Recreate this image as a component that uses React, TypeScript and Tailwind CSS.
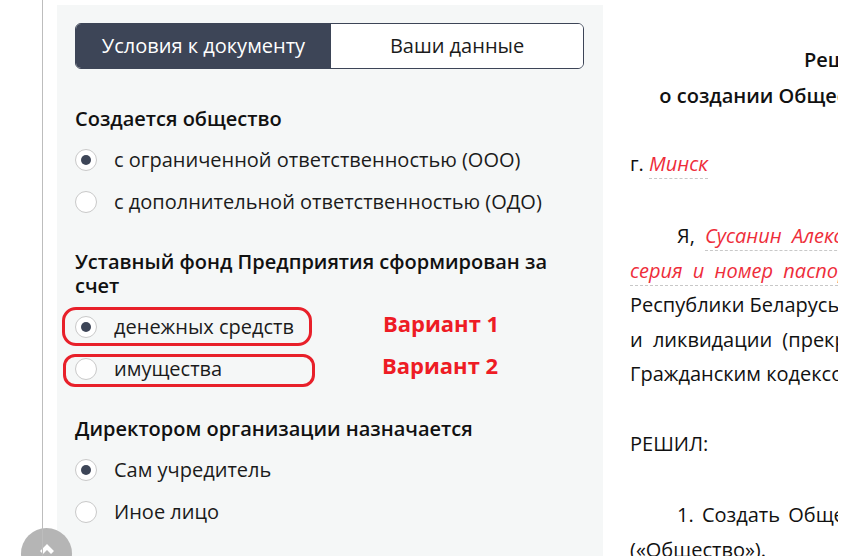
const options1 = [
  { label: "с ограниченной ответственностью (ООО)", checked: true },
  { label: "с дополнительной ответственностью (ОДО)", checked: false },
];

const options3 = [
  { label: "Сам учредитель", checked: true },
  { label: "Иное лицо", checked: false },
];

function Radio({ checked }: { checked: boolean }) {
  return (
    <span className="w-[22px] h-[22px] shrink-0 rounded-full border border-[#c9c9c9] bg-white flex items-center justify-center">
      {checked && <span className="w-[10px] h-[10px] rounded-full bg-[#3d4557]" />}
    </span>
  );
}

function Option({
  label,
  checked,
  children,
}: {
  label: string;
  checked: boolean;
  children?: React.ReactNode;
}) {
  return (
    <div className="relative h-[42px] flex items-center gap-[17px]">
      <Radio checked={checked} />
      <span className="text-[20px] text-[#1b1b1b]">{label}</span>
      {children}
    </div>
  );
}

function Field({ children }: { children: React.ReactNode }) {
  return (
    <span className="italic text-[#ee2d3a] border-b border-dashed border-[#c8c8c8] pb-[1px]">
      {children}
    </span>
  );
}

export default function App() {
  return (
    <div className="relative w-[851px] h-[556px] overflow-hidden bg-white flex font-['Open_Sans',sans-serif] text-[#111]">
      {/* scroll-to-top button behind the guide line */}
      <div className="absolute left-[21px] top-[528px] w-[51px] h-[51px] rounded-full bg-[#b5b5b5] flex justify-center pt-[15px]">
        <svg width="16" height="12" viewBox="0 0 16 12">
          <path d="M8 1 L15 8 L12 11 L8 7 L4 11 L1 8 Z" fill="white" />
        </svg>
      </div>
      <div className="relative z-10 w-[43px] shrink-0 border-r border-[#bdbdbd]" />
      <div className="w-[14px] shrink-0" />

      {/* settings panel */}
      <div className="w-[546px] shrink-0 mt-[5px] bg-[#f5f7f7] pt-[18px] pl-[18px] pr-[19px]">
        <div className="flex h-[46px] rounded-md border border-[#3d4557] overflow-hidden text-[20px]">
          <div className="w-[255px] bg-[#3d4557] text-white flex items-center justify-center">
            Условия к документу
          </div>
          <div className="flex-1 bg-white text-[#1b1b1b] flex items-center justify-center">
            Ваши данные
          </div>
        </div>

        <div className="mt-[38px] text-[20px] leading-[24px] font-semibold">Создается общество</div>
        <div className="mt-[8px]">
          {options1.map((o) => (
            <Option key={o.label} label={o.label} checked={o.checked} />
          ))}
        </div>

        <div className="mt-[27px] text-[20px] leading-[24px] font-semibold">
          Уставный фонд Предприятия сформирован за счет
        </div>
        <div className="mt-[8px]">
          <Option label="денежных средств" checked>
            <span className="absolute left-[-13px] top-[1px] w-[250px] h-[39px] border-[3px] border-[#e8202a] rounded-[14px]" />
            <span className="absolute left-[308px] top-[1px] text-[22px] font-bold text-[#ee1c25]">Вариант 1</span>
          </Option>
          <Option label="имущества" checked={false}>
            <span className="absolute left-[-12px] top-[6px] w-[252px] h-[33px] border-[3px] border-[#e8202a] rounded-[12px]" />
            <span className="absolute left-[307px] top-[1px] text-[22px] font-bold text-[#ee1c25]">Вариант 2</span>
          </Option>
        </div>

        <div className="mt-[27px] text-[20px] leading-[24px] font-semibold">Директором организации назначается</div>
        <div className="mt-[8px]">
          {options3.map((o) => (
            <Option key={o.label} label={o.label} checked={o.checked} />
          ))}
        </div>
      </div>

      {/* document preview, clipped by its frame */}
      <div className="shrink-0 w-[235px] overflow-hidden">
        <div className="w-[480px] pl-[27px] pt-[42px] text-[20px] text-[#111]">
          <div className="w-[440px]">
            <div className="leading-[36px] font-semibold text-center">Решение</div>
            <div className="leading-[36px] font-semibold text-center whitespace-nowrap pl-[8px]">
              о создании Общества с ограниченной
            </div>
            <div className="mt-[33px] leading-[34px]">
              г. <Field>Минск</Field>
            </div>
            <div className="mt-[38px] leading-[34.5px] whitespace-nowrap">
              <div className="pl-[47px] [word-spacing:5px]">
                Я, <Field>Сусанин Александр Петрович</Field>, паспорт
              </div>
              <div className="[word-spacing:5px]">
                <Field>серия и номер паспорта</Field>, гражданин
              </div>
              <div>Республики Беларусь, руководствуясь Положением о государственной регистрации</div>
              <div className="[word-spacing:5px]">и ликвидации (прекращения деятельности) субъектов</div>
              <div>Гражданским кодексом Республики Беларусь,</div>
            </div>
            <div className="mt-[35.5px] leading-[34.5px]">РЕШИЛ:</div>
            <div className="mt-[36.5px] leading-[34.5px] whitespace-nowrap">
              <div className="pl-[47px] [word-spacing:3px]">1. Создать Общество с ограниченной ответственностью</div>
              <div>(«Общество»).</div>
            </div>
          </div>
        </div>
      </div>
    </div>
  );
}
